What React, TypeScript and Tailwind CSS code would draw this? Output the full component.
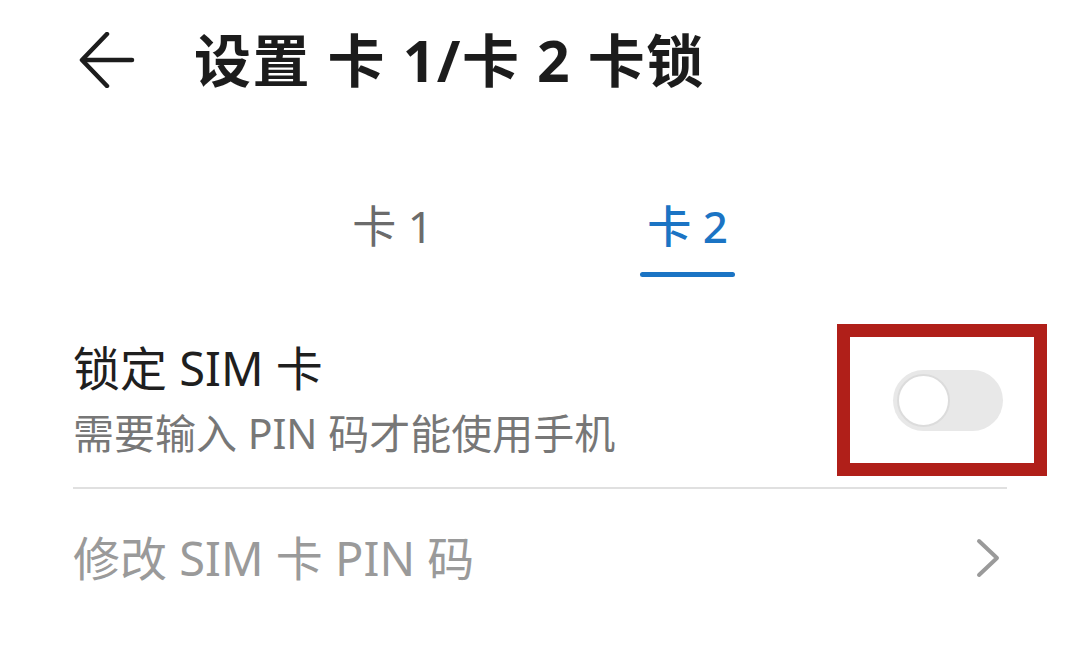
import React from 'react';

const font = { fontFamily: '"Noto Sans", "Noto Sans CJK SC", sans-serif' };

export default function App() {
  const [tab, setTab] = React.useState(2);
  const [locked, setLocked] = React.useState(false);

  return (
    <div className="w-[1080px] h-[658px] bg-white overflow-hidden" style={font}>
      {/* header */}
      <div className="flex items-center h-[64px] mt-[28px] pl-[79px]">
        <svg width="56" height="56" viewBox="0 0 56 56" fill="none" stroke="#1c1c1c" strokeWidth="4.5" strokeLinecap="round" strokeLinejoin="round">
          <path d="M28 4 L3 30 L28 56" transform="translate(0 -2)" />
          <path d="M4 28 H53" />
        </svg>
        <h1 className="ml-[59px] text-[57px] font-bold text-[#1c1c1c] leading-none tracking-[1.6px]">设置 卡 1/卡 2 卡锁</h1>
      </div>

      {/* tabs */}
      <div className="flex justify-center mt-[110px]">
        {[1, 2].map(n => (
          <button key={n} onClick={() => setTab(n)} className="w-[295px] flex flex-col items-center">
            <span className={`text-[44px] leading-[48px] ${tab === n ? 'text-[#1b74c4] font-medium' : 'text-[#6b6b6b]'}`}>卡 {n}</span>
            <span className={`mt-[22px] h-[5px] w-[95px] rounded-full ${tab === n ? 'bg-[#1b74c4]' : 'bg-transparent'}`} />
          </button>
        ))}
      </div>

      {/* lock row */}
      <div className="mx-[73px] mt-[62px] flex items-center justify-between border-b-2 border-[#e0e0e0] pb-[26px]">
        <div className="flex flex-col">
          <span className="text-[47px] leading-[58px] text-[#1f1f1f]">锁定 SIM 卡</span>
          <span className="mt-[8px] text-[41px] leading-[56px] text-[#777]">需要输入 PIN 码才能使用手机</span>
        </div>
        <div className="relative mr-[4px]">
          <button
            onClick={() => setLocked(!locked)}
            className={`w-[110px] h-[61px] rounded-full flex items-center px-[4px] ${locked ? 'bg-[#1b74c4] justify-end' : 'bg-[#e8e8e8] justify-start'}`}
          >
            <span className="w-[53px] h-[53px] rounded-full bg-white border-2 border-[#dcdcdc]" />
          </button>
          <div className="absolute left-[-56px] right-[-44px] top-[-46px] bottom-[-45px] border-[13px] border-[#b01f19] pointer-events-none" />
        </div>
      </div>

      {/* change pin row */}
      <div className="mx-[73px] mt-[40px] flex items-center justify-between">
        <span className="text-[47px] leading-[58px] text-[#9a9a9a]">修改 SIM 卡 PIN 码</span>
        <svg width="26" height="40" viewBox="0 0 26 40" fill="none" stroke="#9a9a9a" strokeWidth="4" strokeLinecap="round" strokeLinejoin="round" className="mr-[6px]">
          <path d="M4 3 L22 20 L4 37" />
        </svg>
      </div>
    </div>
  );
}
